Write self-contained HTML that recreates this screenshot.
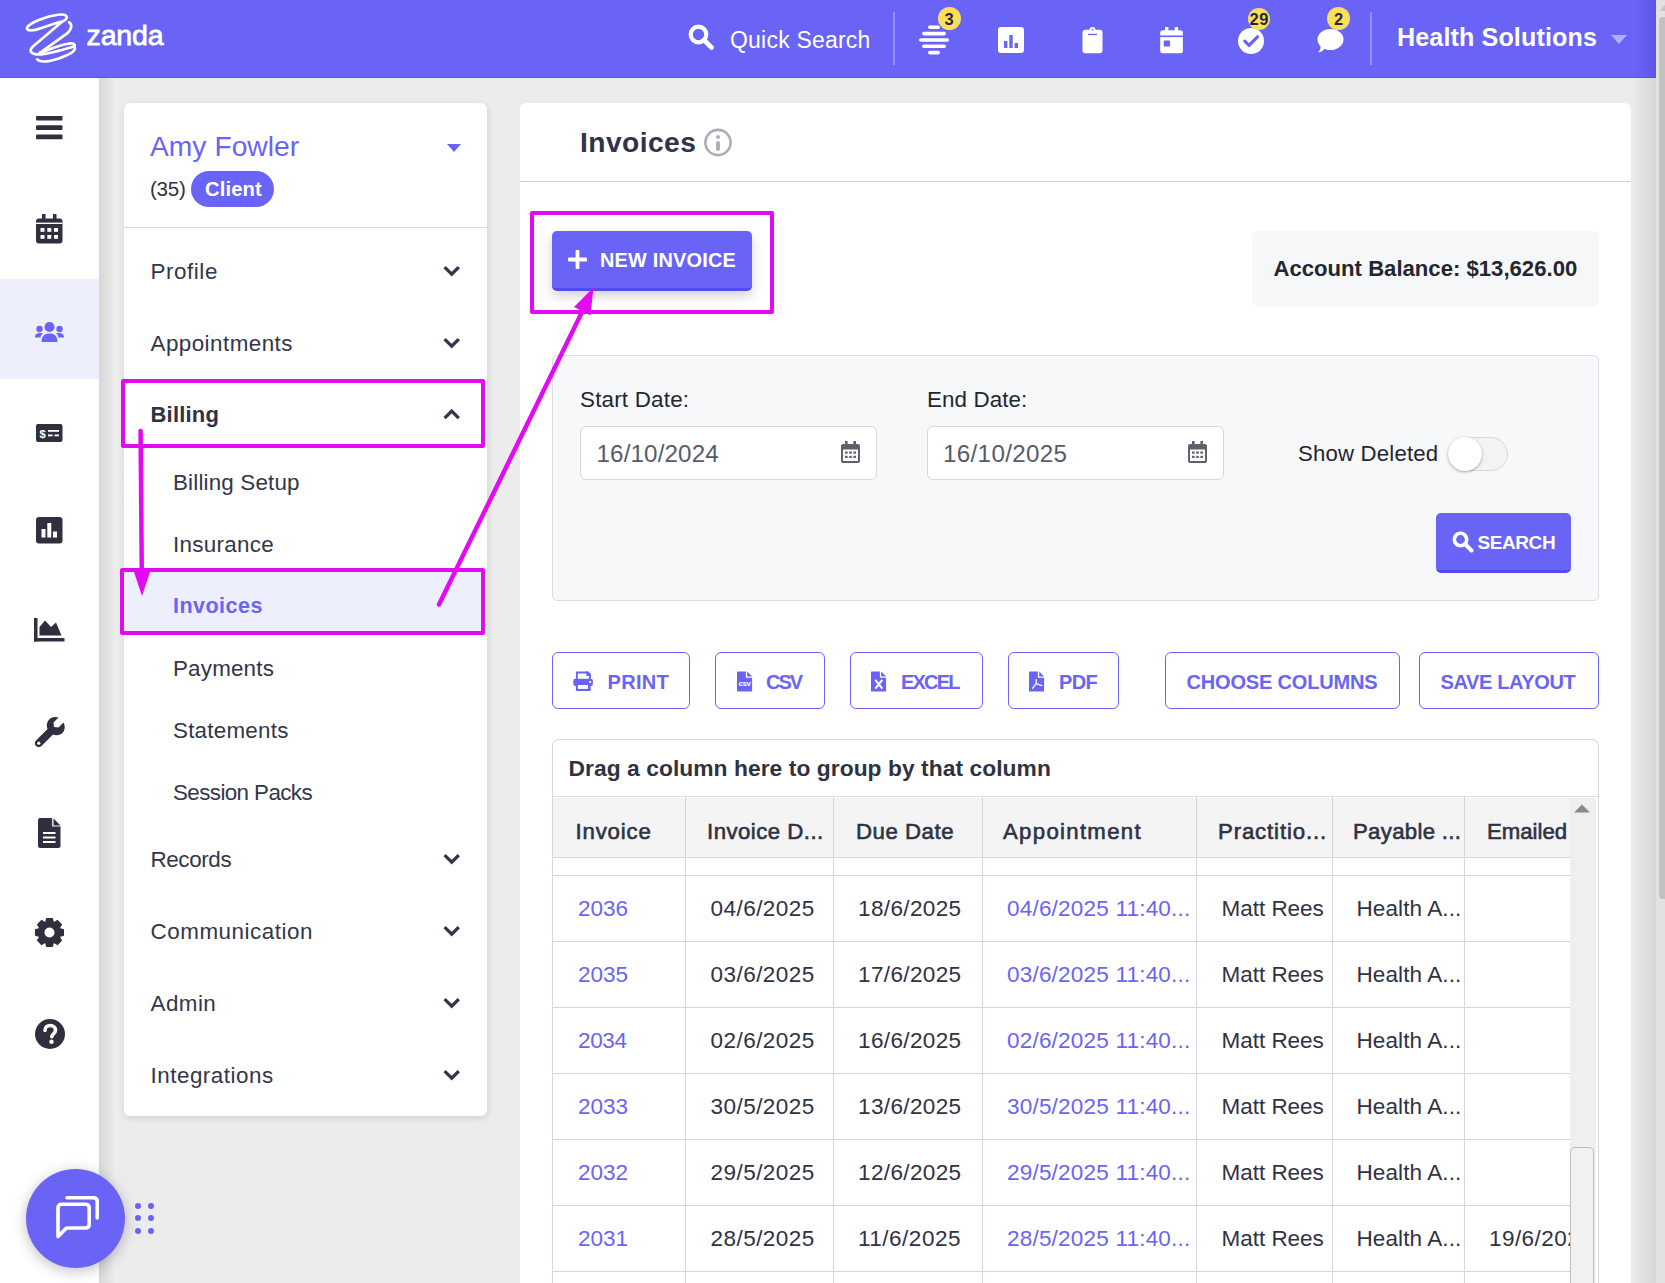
<!DOCTYPE html>
<html><head><meta charset="utf-8"><title>Invoices</title>
<style>
html{margin:0;padding:0;width:1665px;height:1283px;overflow:hidden;background:#ececec;}
body{margin:0;padding:0;}
body{width:1665px;height:1283px;overflow:hidden;position:relative;background:#ececec;font-family:"Liberation Sans",sans-serif;}
.t{position:absolute;white-space:nowrap;line-height:1;}
.b{position:absolute;}
.badge{background:#fbdf5b;border-radius:50%;color:#262838;font-weight:700;font-size:16.5px;letter-spacing:0.4px;line-height:1;display:flex;align-items:center;justify-content:center;font-family:"Liberation Sans",sans-serif;}
</style></head><body>
<div class="b" style="left:0px;top:0px;width:1656px;height:78px;background:#6964f6;"></div>
<div class="b" style="left:0px;top:77px;width:1656px;height:1px;background:#5b56ea;"></div>
<div class="b" style="left:1636px;top:0px;width:20px;height:78px;background:linear-gradient(90deg,rgba(40,30,160,0),rgba(40,30,160,.2));"></div>
<svg class="b" style="left:20px;top:8px;" width="150" height="62" viewBox="0 0 1665 688"><g fill="none" stroke="#fff" stroke-width="30" stroke-linecap="round" stroke-linejoin="round"><path d="M470,150 C560,110 520,60 420,75 C300,90 110,160 80,215 C60,260 150,255 230,225 C330,190 420,160 470,150 L140,430 C90,480 130,520 230,515 C330,505 520,450 590,430 C630,410 600,380 520,400 C420,420 300,470 220,495" /><path d="M545,160 C580,180 580,230 520,285 L225,495" /><path d="M190,570 C230,610 340,590 430,560 C520,530 610,490 610,445" /></g></svg>
<div class="t" style="left:86.5px;top:21.37px;font-size:28.5px;color:#fff;font-weight:400;letter-spacing:-0.125px;-webkit-text-stroke:0.8px #fff;">zanda</div>
<svg class="b" style="left:688px;top:24px;" width="27" height="26" viewBox="0 0 27 26"><circle cx="10.5" cy="10.5" r="7.8" fill="none" stroke="#fff" stroke-width="4.2"/><line x1="16" y1="16" x2="23.5" y2="23.5" stroke="#fff" stroke-width="4.6" stroke-linecap="round"/></svg>
<div class="t" style="left:730px;top:29.43px;font-size:23px;color:#fff;font-weight:400;letter-spacing:0.209px;">Quick Search</div>
<div class="b" style="left:893px;top:12px;width:2px;height:53px;background:#9390f9;"></div>
<div class="b" style="left:1370px;top:12px;width:2px;height:53px;background:#9390f9;"></div>
<svg class="b" style="left:919px;top:26px;overflow:visible;" width="30" height="30" viewBox="0 0 30 30"><rect x="9" y="-0.50" width="12" height="3.6" rx="1.8" fill="#fff"/><rect x="3" y="5.80" width="24" height="3.6" rx="1.8" fill="#fff"/><rect x="0" y="12.20" width="30" height="3.6" rx="1.8" fill="#fff"/><rect x="3" y="18.50" width="24" height="3.6" rx="1.8" fill="#fff"/><rect x="9" y="24.80" width="12" height="3.6" rx="1.8" fill="#fff"/></svg>
<svg class="b" style="left:998px;top:27px;" width="26" height="26" viewBox="0 0 26 26"><rect x="0" y="0" width="26" height="26" rx="3" fill="#fff"/><rect x="6" y="14" width="3.4" height="7" fill="#6964f6"/><rect x="11.3" y="8" width="3.4" height="13" fill="#6964f6"/><rect x="16.6" y="16" width="3.4" height="5" fill="#6964f6"/></svg>
<svg class="b" style="left:1082px;top:26px;" width="21" height="28" viewBox="0 0 21 28"><rect x="0.5" y="3.8" width="20" height="23.5" rx="2.8" fill="#fff"/><circle cx="10.5" cy="3.9" r="3" fill="#fff"/><circle cx="10.5" cy="3.6" r="0.9" fill="#6964f6"/><rect x="6" y="7.8" width="9" height="1.3" fill="#6964f6"/></svg>
<svg class="b" style="left:1160px;top:26px;" width="24" height="28" viewBox="0 0 24 28"><rect x="0.2" y="4.2" width="22.7" height="23.1" rx="2.5" fill="#fff"/><rect x="5" y="1.1" width="3.4" height="4" fill="#fff"/><rect x="14.7" y="1.1" width="3.4" height="4" fill="#fff"/><rect x="0" y="9.5" width="23" height="1.6" fill="#6964f6"/><rect x="3.75" y="14.4" width="6.25" height="6.2" rx="0.6" fill="#6964f6"/></svg>
<svg class="b" style="left:1238px;top:27.5px;" width="26" height="26" viewBox="0 0 26 26"><circle cx="13" cy="13" r="13" fill="#fff"/><path d="M6.8,13.2 L11,17.4 L19.5,8.8" fill="none" stroke="#6964f6" stroke-width="3.2" stroke-linecap="round" stroke-linejoin="round"/></svg>
<svg class="b" style="left:1316px;top:28px;" width="28" height="25" viewBox="0 0 28 25"><ellipse cx="14.5" cy="11.5" rx="13" ry="10.5" fill="#fff"/><path d="M2,24.5 C6,24 9,21.5 9,19 L4.5,17.5 C5,20 4,22.5 2,24.5z" fill="#fff"/></svg>
<div class="b badge" style="left:937.5px;top:7.399999999999999px;width:23px;height:23px;"><span style="position:relative;top:0.5px;left:0.2px">3</span></div>
<div class="b badge" style="left:1247.75px;top:7.649999999999999px;width:22.5px;height:22.5px;"><span style="position:relative;top:0.5px;left:0.2px">29</span></div>
<div class="b badge" style="left:1327.0px;top:7.399999999999999px;width:23px;height:23px;"><span style="position:relative;top:0.5px;left:0.2px">2</span></div>
<div class="t" style="left:1397px;top:25.45px;font-size:25.1px;color:#fff;font-weight:700;letter-spacing:0.127px;">Health Solutions</div>
<svg class="b" style="left:1611px;top:35px;" width="16" height="10" viewBox="0 0 16 10"><path d="M0,0 L16,0 L8,9z" fill="#b1aefb"/></svg>
<div class="b" style="left:1656px;top:0px;width:9px;height:1283px;background:#e2e2e2;"></div>
<div class="b" style="left:1659px;top:17px;width:6px;height:882px;background:#c1c1c1;border-radius:4px 0 0 4px;"></div>
<svg class="b" style="left:1658px;top:3px;overflow:hidden;" width="7" height="9" viewBox="0 0 7 9"><path d="M1,8 L8,1 L15,8z" fill="#c4c4c4"/></svg>
<div class="b" style="left:1631px;top:78px;width:25px;height:1205px;background:linear-gradient(90deg,rgba(0,0,0,0),rgba(0,0,0,.09));"></div>
<div class="b" style="left:0px;top:78px;width:99px;height:1205px;background:#fff;"></div>
<div class="b" style="left:99px;top:78px;width:16px;height:1205px;background:linear-gradient(90deg,rgba(0,0,0,.09),rgba(0,0,0,0));"></div>
<div class="b" style="left:0px;top:279px;width:99px;height:100px;background:#eeeffd;"></div>
<svg class="b" style="left:36px;top:116px;" width="27" height="24" viewBox="0 0 27 24"><rect x="0" y="0" width="26.5" height="4.6" rx="1" fill="#2f2f3f"/><rect x="0" y="9.3" width="26.5" height="4.6" rx="1" fill="#2f2f3f"/><rect x="0" y="18.6" width="26.5" height="4.6" rx="1" fill="#2f2f3f"/></svg>
<svg class="b" style="left:36px;top:214px;" width="27" height="30" viewBox="0 0 27 30"><rect x="0" y="4.5" width="26.5" height="25" rx="3" fill="#2f2f3f"/><rect x="6" y="0" width="3.5" height="6" fill="#2f2f3f"/><rect x="17" y="0" width="3.5" height="6" fill="#2f2f3f"/><rect x="0" y="8.6" width="26.5" height="1.4" fill="#fff"/><rect x="4.5" y="14" width="4" height="3.8" fill="#fff"/><rect x="4.5" y="21" width="4" height="3.8" fill="#fff"/><rect x="11.3" y="14" width="4" height="3.8" fill="#fff"/><rect x="11.3" y="21" width="4" height="3.8" fill="#fff"/><rect x="18" y="14" width="4" height="3.8" fill="#fff"/><rect x="18" y="21" width="4" height="3.8" fill="#fff"/></svg>
<svg class="b" style="left:35px;top:322px;" width="29" height="21" viewBox="0 0 29 21"><circle cx="14.5" cy="5" r="5" fill="#6964f6"/><path d="M6.5,20 C6.5,14 9.5,11.5 14.5,11.5 C19.5,11.5 22.5,14 22.5,20z" fill="#6964f6"/><circle cx="4.5" cy="7" r="3.2" fill="#6964f6"/><circle cx="24.5" cy="7" r="3.2" fill="#6964f6"/><path d="M0,15.5 C0,12 2,11 5.5,11 L8,11 C6.5,12.5 5.5,14 5.5,15.5z" fill="#6964f6"/><path d="M29,15.5 C29,12 27,11 23.5,11 L21,11 C22.5,12.5 23.5,14 23.5,15.5z" fill="#6964f6"/></svg>
<svg class="b" style="left:36px;top:424px;" width="27" height="18" viewBox="0 0 27 18"><rect x="0" y="0" width="26.5" height="18" rx="2" fill="#2f2f3f"/><text x="6.5" y="13.5" font-family="Liberation Sans" font-weight="700" font-size="11" fill="#fff" text-anchor="middle">$</text><rect x="12" y="6" width="11" height="1.8" fill="#fff"/><rect x="12" y="10.5" width="4.5" height="1.8" fill="#fff"/><rect x="18.5" y="10.5" width="4.5" height="1.8" fill="#fff"/></svg>
<svg class="b" style="left:36px;top:517px;" width="27" height="27" viewBox="0 0 27 27"><rect x="0" y="0" width="26.5" height="26.5" rx="3" fill="#2f2f3f"/><rect x="5.5" y="12" width="4" height="8.5" fill="#fff"/><rect x="11.3" y="6" width="4" height="14.5" fill="#fff"/><rect x="17" y="14.5" width="4" height="6" fill="#fff"/></svg>
<svg class="b" style="left:34px;top:618px;" width="31" height="24" viewBox="0 0 31 24"><rect x="0" y="0" width="3.5" height="23.5" fill="#2f2f3f"/><rect x="0" y="20" width="30.5" height="3.5" fill="#2f2f3f"/><path d="M5.5,17.5 L5.5,9 L11,2.5 L17,9 L22,4.5 L27.5,17.5z" fill="#2f2f3f"/></svg>
<svg class="b" style="left:34px;top:716px;" width="31" height="31" viewBox="0 0 31 31"><path d="M29.5,6.5 L24.5,11.5 L20,11 L19.5,6.5 L24.5,1.5 C20.5,0 16,1.5 14,5 C12.5,7.5 12.5,10.5 13.5,13 L2,24.5 C0.5,26 0.5,28.5 2,30 C3.5,31.5 6,31.5 7.5,30 L19,18.5 C21.5,19.5 24.5,19.5 27,18 C30.5,16 32,11 29.5,6.5z" fill="#2f2f3f"/><circle cx="4.8" cy="27.2" r="1.6" fill="#fff"/></svg>
<svg class="b" style="left:38px;top:818px;" width="23" height="30" viewBox="0 0 23 30"><path d="M0,2 C0,1 1,0 2,0 L14,0 L22.5,8.5 L22.5,28 C22.5,29 21.5,30 20.5,30 L2,30 C1,30 0,29 0,28z" fill="#2f2f3f"/><path d="M14.8,0 L14.8,8 L22.5,8" fill="#fff" stroke="#fff" stroke-width="1.2"/><path d="M15.5,0.5 L22.5,7.5 L15.5,7.5z" fill="#2f2f3f"/><rect x="5" y="14" width="12.5" height="2" fill="#fff"/><rect x="5" y="18.5" width="12.5" height="2" fill="#fff"/><rect x="5" y="23" width="12.5" height="2" fill="#fff"/></svg>
<svg class="b" style="left:35px;top:918px;" width="29" height="29" viewBox="0 0 29 29"><path d="M29.14,11.23 L29.14,17.77 L24.54,18.99 L24.77,18.43 L27.17,22.54 L22.54,27.17 L18.43,24.77 L18.99,24.54 L17.77,29.14 L11.23,29.14 L10.01,24.54 L10.57,24.77 L6.46,27.17 L1.83,22.54 L4.23,18.43 L4.46,18.99 L-0.14,17.77 L-0.14,11.23 L4.46,10.01 L4.23,10.57 L1.83,6.46 L6.46,1.83 L10.57,4.23 L10.01,4.46 L11.23,-0.14 L17.77,-0.14 L18.99,4.46 L18.43,4.23 L22.54,1.83 L27.17,6.46 L24.77,10.57 L24.54,10.01z" fill="#2f2f3f"/><circle cx="14.5" cy="14.5" r="10.8" fill="#2f2f3f"/><circle cx="14.5" cy="14.5" r="5" fill="#fff"/></svg>
<svg class="b" style="left:35px;top:1019px;" width="30" height="30" viewBox="0 0 30 30"><circle cx="15" cy="15" r="15" fill="#2f2f3f"/><path d="M10,11.5 C10,8 12.5,6.5 15.2,6.5 C18.2,6.5 20.5,8.5 20.5,11.2 C20.5,14.5 16.8,15 16.8,17.8" fill="none" stroke="#fff" stroke-width="3.6" stroke-linecap="round"/><circle cx="16.5" cy="22.8" r="2.2" fill="#fff"/></svg>
<div class="b" style="left:124px;top:103px;width:363px;height:1013px;background:#fff;border-radius:6px;box-shadow:1px 2px 7px rgba(0,0,0,.12);"></div>
<div class="t" style="left:150px;top:132.13px;font-size:28.2px;color:#6964f6;font-weight:400;letter-spacing:0.044px;">Amy Fowler</div>
<svg class="b" style="left:447px;top:144px;" width="14" height="9" viewBox="0 0 14 9"><path d="M0,0 L14,0 L7,8z" fill="#6964f6"/></svg>
<div class="t" style="left:150px;top:178.75px;font-size:20.5px;color:#2f3243;font-weight:400;letter-spacing:-0.233px;">(35)</div>
<div class="b" style="left:191px;top:171px;width:83px;height:36px;background:#6964f6;border-radius:18px;"></div>
<div class="t" style="left:205px;top:179.00px;font-size:20.2px;color:#fff;font-weight:700;letter-spacing:0.14px;">Client</div>
<div class="b" style="left:124px;top:227px;width:363px;height:1px;background:#dcdce1;"></div>
<div class="t" style="left:150.5px;top:260.54px;font-size:22.4px;color:#33364a;font-weight:400;letter-spacing:0.567px;">Profile</div>
<svg class="b" style="left:443px;top:264.7px;" width="17.4" height="12" viewBox="0 0 17.4 12"><path d="M1.6,2.1 L8.7,9.2 L15.8,2.1" fill="none" stroke="#33364a" stroke-width="3.3" stroke-linecap="butt" stroke-linejoin="miter"/></svg>
<div class="t" style="left:150.5px;top:332.54px;font-size:22.4px;color:#33364a;font-weight:400;letter-spacing:0.455px;">Appointments</div>
<svg class="b" style="left:443px;top:336.7px;" width="17.4" height="12" viewBox="0 0 17.4 12"><path d="M1.6,2.1 L8.7,9.2 L15.8,2.1" fill="none" stroke="#33364a" stroke-width="3.3" stroke-linecap="butt" stroke-linejoin="miter"/></svg>
<div class="t" style="left:150.5px;top:848.54px;font-size:22.4px;color:#33364a;font-weight:400;letter-spacing:-0.383px;">Records</div>
<svg class="b" style="left:443px;top:852.7px;" width="17.4" height="12" viewBox="0 0 17.4 12"><path d="M1.6,2.1 L8.7,9.2 L15.8,2.1" fill="none" stroke="#33364a" stroke-width="3.3" stroke-linecap="butt" stroke-linejoin="miter"/></svg>
<div class="t" style="left:150.5px;top:920.54px;font-size:22.4px;color:#33364a;font-weight:400;letter-spacing:0.542px;">Communication</div>
<svg class="b" style="left:443px;top:924.7px;" width="17.4" height="12" viewBox="0 0 17.4 12"><path d="M1.6,2.1 L8.7,9.2 L15.8,2.1" fill="none" stroke="#33364a" stroke-width="3.3" stroke-linecap="butt" stroke-linejoin="miter"/></svg>
<div class="t" style="left:150.5px;top:992.54px;font-size:22.4px;color:#33364a;font-weight:400;letter-spacing:0.45px;">Admin</div>
<svg class="b" style="left:443px;top:996.7px;" width="17.4" height="12" viewBox="0 0 17.4 12"><path d="M1.6,2.1 L8.7,9.2 L15.8,2.1" fill="none" stroke="#33364a" stroke-width="3.3" stroke-linecap="butt" stroke-linejoin="miter"/></svg>
<div class="t" style="left:150.5px;top:1064.54px;font-size:22.4px;color:#33364a;font-weight:400;letter-spacing:0.509px;">Integrations</div>
<svg class="b" style="left:443px;top:1068.7px;" width="17.4" height="12" viewBox="0 0 17.4 12"><path d="M1.6,2.1 L8.7,9.2 L15.8,2.1" fill="none" stroke="#33364a" stroke-width="3.3" stroke-linecap="butt" stroke-linejoin="miter"/></svg>
<div class="b" style="left:124px;top:572px;width:359px;height:59px;background:#eeeffd;"></div>
<div class="t" style="left:150.5px;top:403.88px;font-size:22px;color:#2f3243;font-weight:700;letter-spacing:0.2px;">Billing</div>
<svg class="b" style="left:443px;top:408.7px;" width="17.4" height="12" viewBox="0 0 17.4 12"><path d="M1.6,9.2 L8.7,2.1 L15.8,9.2" fill="none" stroke="#33364a" stroke-width="3.3" stroke-linecap="butt" stroke-linejoin="miter"/></svg>
<div class="t" style="left:173px;top:471.54px;font-size:22.4px;color:#33364a;font-weight:400;letter-spacing:0.167px;">Billing Setup</div>
<div class="t" style="left:173px;top:533.54px;font-size:22.4px;color:#33364a;font-weight:400;letter-spacing:0.287px;">Insurance</div>
<div class="t" style="left:173px;top:657.54px;font-size:22.4px;color:#33364a;font-weight:400;letter-spacing:0.186px;">Payments</div>
<div class="t" style="left:173px;top:719.54px;font-size:22.4px;color:#33364a;font-weight:400;letter-spacing:0.233px;">Statements</div>
<div class="t" style="left:173px;top:781.54px;font-size:22.4px;color:#33364a;font-weight:400;letter-spacing:-0.6px;">Session Packs</div>
<div class="t" style="left:173px;top:596.30px;font-size:21.5px;color:#6964f6;font-weight:700;letter-spacing:0.471px;">Invoices</div>
<div class="b" style="left:520px;top:103px;width:1111px;height:1180px;background:#fff;border-radius:6px 6px 0 0;box-shadow:0 0 1px rgba(0,0,0,.06);"></div>
<div class="t" style="left:580px;top:128.43px;font-size:28.2px;color:#2f3446;font-weight:700;letter-spacing:0.429px;">Invoices</div>
<svg class="b" style="left:703px;top:128px;" width="30" height="30" viewBox="0 0 30 30"><circle cx="15" cy="14.5" r="12.6" fill="none" stroke="#acadb5" stroke-width="2.6"/><circle cx="15" cy="9" r="1.95" fill="#acadb5"/><rect x="13.05" y="13" width="3.9" height="10" rx="1.95" fill="#acadb5"/></svg>
<div class="b" style="left:520px;top:181px;width:1111px;height:1px;background:#cfd0d7;"></div>
<div class="b" style="left:552px;top:231px;width:200px;height:60px;background:#6964f6;border-radius:5px;border-bottom:3px solid #504bf2;box-sizing:border-box;box-shadow:0 5px 12px rgba(0,0,0,.18);"></div>
<svg class="b" style="left:568px;top:250px;" width="19" height="19" viewBox="0 0 19 19"><rect x="7.6" y="0" width="3.8" height="19" rx="1" fill="#fff"/><rect x="0" y="7.6" width="19" height="3.8" rx="1" fill="#fff"/></svg>
<div class="t" style="left:600px;top:250.65px;font-size:19.9px;color:#fff;font-weight:700;letter-spacing:0.2px;">NEW INVOICE</div>
<div class="b" style="left:1252px;top:231px;width:347px;height:75px;background:#f6f7f9;border-radius:6px;"></div>
<div class="t" style="left:1273.5px;top:257.79px;font-size:22.1px;color:#23252f;font-weight:700;letter-spacing:0.015px;">Account Balance: $13,626.00</div>
<div class="b" style="left:552px;top:355px;width:1047px;height:246px;background:#f7f8fa;border:1px solid #dcdde2;border-radius:5px;box-sizing:border-box;"></div>
<div class="t" style="left:580px;top:389.44px;font-size:22.4px;color:#222631;font-weight:400;letter-spacing:0.2px;">Start Date:</div>
<div class="b" style="left:580px;top:426px;width:297px;height:54px;background:#fff;border:1px solid #d6d7dc;border-radius:6px;box-sizing:border-box;"></div>
<svg class="b" style="left:841px;top:441px;" width="19" height="22" viewBox="0 0 19 22"><rect x="0" y="3" width="19" height="19" rx="2" fill="#5f606c"/><rect x="4" y="0" width="2.6" height="4.5" fill="#5f606c"/><rect x="12.4" y="0" width="2.6" height="4.5" fill="#5f606c"/><rect x="2" y="8.5" width="15" height="11.5" fill="#fff"/><rect x="4" y="10.5" width="2.6" height="2.2" fill="#5f606c"/><rect x="4" y="14.8" width="2.6" height="2.2" fill="#5f606c"/><rect x="8.2" y="10.5" width="2.6" height="2.2" fill="#5f606c"/><rect x="8.2" y="14.8" width="2.6" height="2.2" fill="#5f606c"/><rect x="12.4" y="10.5" width="2.6" height="2.2" fill="#5f606c"/><rect x="12.4" y="14.8" width="2.6" height="2.2" fill="#5f606c"/></svg>
<div class="t" style="left:927px;top:389.44px;font-size:22.4px;color:#222631;font-weight:400;letter-spacing:0.088px;">End Date:</div>
<div class="b" style="left:927px;top:426px;width:297px;height:54px;background:#fff;border:1px solid #d6d7dc;border-radius:6px;box-sizing:border-box;"></div>
<svg class="b" style="left:1188px;top:441px;" width="19" height="22" viewBox="0 0 19 22"><rect x="0" y="3" width="19" height="19" rx="2" fill="#5f606c"/><rect x="4" y="0" width="2.6" height="4.5" fill="#5f606c"/><rect x="12.4" y="0" width="2.6" height="4.5" fill="#5f606c"/><rect x="2" y="8.5" width="15" height="11.5" fill="#fff"/><rect x="4" y="10.5" width="2.6" height="2.2" fill="#5f606c"/><rect x="4" y="14.8" width="2.6" height="2.2" fill="#5f606c"/><rect x="8.2" y="10.5" width="2.6" height="2.2" fill="#5f606c"/><rect x="8.2" y="14.8" width="2.6" height="2.2" fill="#5f606c"/><rect x="12.4" y="10.5" width="2.6" height="2.2" fill="#5f606c"/><rect x="12.4" y="14.8" width="2.6" height="2.2" fill="#5f606c"/></svg>
<div class="t" style="left:596.5px;top:442.11px;font-size:24.2px;color:#575b69;font-weight:400;letter-spacing:0.122px;">16/10/2024</div>
<div class="t" style="left:943px;top:442.11px;font-size:24.2px;color:#575b69;font-weight:400;letter-spacing:0.333px;">16/10/2025</div>
<div class="t" style="left:1298px;top:443.21px;font-size:22.2px;color:#222631;font-weight:400;letter-spacing:0.182px;">Show Deleted</div>
<div class="b" style="left:1448px;top:437px;width:60px;height:34px;background:#f3f3f5;border:1.5px solid #d8d8dc;border-radius:17px;box-sizing:border-box;"></div>
<div class="b" style="left:1448px;top:437px;width:34px;height:34px;background:#fff;border-radius:50%;box-shadow:0 1px 3px rgba(0,0,0,.35);"></div>
<div class="b" style="left:1436px;top:513px;width:135px;height:60px;background:#6964f6;border-radius:5px;border-bottom:3px solid #504bf2;box-sizing:border-box;"></div>
<svg class="b" style="left:1452px;top:531px;" width="22" height="22" viewBox="0 0 22 22"><circle cx="8.5" cy="8.5" r="6.2" fill="none" stroke="#fff" stroke-width="3.6"/><line x1="13" y1="13" x2="19.5" y2="19.5" stroke="#fff" stroke-width="4" stroke-linecap="round"/></svg>
<div class="t" style="left:1477.5px;top:533.02px;font-size:19px;color:#fff;font-weight:700;letter-spacing:-0.42px;">SEARCH</div>
<div class="b" style="left:552px;top:652px;width:138px;height:57px;background:#fff;border:1.5px solid #6964f6;border-radius:6px;box-sizing:border-box;"></div>
<div class="b" style="left:715px;top:652px;width:110px;height:57px;background:#fff;border:1.5px solid #6964f6;border-radius:6px;box-sizing:border-box;"></div>
<div class="b" style="left:850px;top:652px;width:133px;height:57px;background:#fff;border:1.5px solid #6964f6;border-radius:6px;box-sizing:border-box;"></div>
<div class="b" style="left:1008px;top:652px;width:111px;height:57px;background:#fff;border:1.5px solid #6964f6;border-radius:6px;box-sizing:border-box;"></div>
<div class="b" style="left:1165px;top:652px;width:235px;height:57px;background:#fff;border:1.5px solid #6964f6;border-radius:6px;box-sizing:border-box;"></div>
<div class="b" style="left:1419px;top:652px;width:180px;height:57px;background:#fff;border:1.5px solid #6964f6;border-radius:6px;box-sizing:border-box;"></div>
<svg class="b" style="left:573px;top:671px;" width="21" height="21" viewBox="0 0 21 21"><path d="M3.85,8 V1.45 H14.8 L16.9,3.55 V8" fill="none" stroke="#6964f6" stroke-width="1.9" stroke-linejoin="miter"/><path d="M13.3,0.5 H15.2 L17.8,3.1 V5 H13.3z" fill="#6964f6"/><rect x="0.3" y="7.8" width="19.6" height="7.1" rx="2" fill="#6964f6"/><rect x="2.9" y="13" width="14.8" height="7" rx="0.8" fill="#6964f6"/><rect x="4.9" y="14" width="10.1" height="3.9" fill="#fff"/><rect x="16.1" y="10.1" width="1.9" height="1.8" fill="#fff"/></svg>
<svg class="b" style="left:736.7px;top:671px;" width="16" height="21" viewBox="0 0 16 21"><path d="M0,1.2 Q0,0.5 0.8,0.5 L8.9,0.5 L8.9,6.7 L15.1,6.7 L15.1,19.9 Q15.1,20.6 14.3,20.6 L0.8,20.6 Q0,20.6 0,19.9z" fill="#6964f6"/><path d="M10.2,0.6 L15.1,5.4 L10.2,5.4z" fill="#6964f6"/><text x="7.6" y="15.2" font-family="Liberation Sans" font-weight="700" font-size="7.8" fill="#fff" text-anchor="middle" letter-spacing="-0.3">csv</text></svg>
<svg class="b" style="left:871.2px;top:671px;" width="16" height="21" viewBox="0 0 16 21"><path d="M0,1.2 Q0,0.5 0.8,0.5 L8.9,0.5 L8.9,6.7 L15.1,6.7 L15.1,19.9 Q15.1,20.6 14.3,20.6 L0.8,20.6 Q0,20.6 0,19.9z" fill="#6964f6"/><path d="M10.2,0.6 L15.1,5.4 L10.2,5.4z" fill="#6964f6"/><path d="M4.3,8.9 L11.3,17.6 M11.3,8.9 L4.3,17.6" stroke="#fff" stroke-width="2.1"/></svg>
<svg class="b" style="left:1029px;top:671px;" width="16" height="21" viewBox="0 0 16 21"><path d="M0,1.2 Q0,0.5 0.8,0.5 L8.9,0.5 L8.9,6.7 L15.1,6.7 L15.1,19.9 Q15.1,20.6 14.3,20.6 L0.8,20.6 Q0,20.6 0,19.9z" fill="#6964f6"/><path d="M10.2,0.6 L15.1,5.4 L10.2,5.4z" fill="#6964f6"/><path d="M7.2,8.6 L7.2,12.6 L3.6,17.2 M7.2,12.6 L12.8,14.6" fill="none" stroke="#fff" stroke-width="1.3" stroke-linecap="round" stroke-linejoin="round"/></svg>
<div class="t" style="left:607.5px;top:672.17px;font-size:20px;color:#6964f6;font-weight:700;letter-spacing:0.325px;">PRINT</div>
<div class="t" style="left:766px;top:672.17px;font-size:20px;color:#6964f6;font-weight:700;letter-spacing:-2.0px;">CSV</div>
<div class="t" style="left:901px;top:672.17px;font-size:20px;color:#6964f6;font-weight:700;letter-spacing:-1.825px;">EXCEL</div>
<div class="t" style="left:1059px;top:672.17px;font-size:20px;color:#6964f6;font-weight:700;letter-spacing:-0.6px;">PDF</div>
<div class="t" style="left:1186.5px;top:672.17px;font-size:20px;color:#6964f6;font-weight:700;letter-spacing:-0.177px;">CHOOSE COLUMNS</div>
<div class="t" style="left:1440.5px;top:672.17px;font-size:20px;color:#6964f6;font-weight:700;letter-spacing:-0.36px;">SAVE LAYOUT</div>
<div class="b" style="left:552px;top:739px;width:1047px;height:544px;background:#fff;border:1px solid #d5d5db;border-bottom:none;border-radius:7px 7px 0 0;box-sizing:border-box;"></div>
<div class="t" style="left:568.5px;top:757.20px;font-size:22.8px;color:#2f3243;font-weight:700;letter-spacing:0.056px;">Drag a column here to group by that column</div>
<div class="b" style="left:553px;top:796px;width:1045px;height:1px;background:#dcdce1;"></div>
<div class="b" style="left:553px;top:798px;width:1017px;height:59px;background:#f4f4f5;"></div>
<div class="b" style="left:553px;top:857px;width:1017px;height:1px;background:#d5d5db;"></div>
<div class="b" style="left:685px;top:797px;width:1px;height:486px;background:#d5d5db;"></div>
<div class="b" style="left:833px;top:797px;width:1px;height:486px;background:#d5d5db;"></div>
<div class="b" style="left:982px;top:797px;width:1px;height:486px;background:#d5d5db;"></div>
<div class="b" style="left:1196px;top:797px;width:1px;height:486px;background:#d5d5db;"></div>
<div class="b" style="left:1332px;top:797px;width:1px;height:486px;background:#d5d5db;"></div>
<div class="b" style="left:1464px;top:797px;width:1px;height:486px;background:#d5d5db;"></div>
<div class="b" style="left:553px;top:797px;width:1017px;height:486px;overflow:hidden;">
<div class="t" style="left:22.5px;top:23.71px;font-size:22.2px;color:#2f3243;font-weight:400;letter-spacing:0.833px;-webkit-text-stroke:0.6px #2f3243;">Invoice</div>
<div class="t" style="left:154px;top:23.71px;font-size:22.2px;color:#2f3243;font-weight:400;letter-spacing:0.482px;-webkit-text-stroke:0.6px #2f3243;">Invoice D...</div>
<div class="t" style="left:303px;top:23.71px;font-size:22.2px;color:#2f3243;font-weight:400;letter-spacing:0.543px;-webkit-text-stroke:0.6px #2f3243;">Due Date</div>
<div class="t" style="left:450px;top:23.71px;font-size:22.2px;color:#2f3243;font-weight:400;letter-spacing:1.3px;-webkit-text-stroke:0.6px #2f3243;">Appointment</div>
<div class="t" style="left:665px;top:23.71px;font-size:22.2px;color:#2f3243;font-weight:400;letter-spacing:0.864px;-webkit-text-stroke:0.6px #2f3243;">Practitio...</div>
<div class="t" style="left:800px;top:23.71px;font-size:22.2px;color:#2f3243;font-weight:400;letter-spacing:0.3px;-webkit-text-stroke:0.6px #2f3243;">Payable ...</div>
<div class="t" style="left:934px;top:23.71px;font-size:22.2px;color:#2f3243;font-weight:400;letter-spacing:0px;-webkit-text-stroke:0.6px #2f3243;">Emailed</div>
<div class="b" style="left:0px;top:78px;width:1017px;height:1px;background:#d5d5db;"></div>
<div class="b" style="left:0px;top:144px;width:1017px;height:1px;background:#d5d5db;"></div>
<div class="t" style="left:25px;top:101.45px;font-size:22.5px;color:#6964f6;font-weight:400;letter-spacing:0.0px;">2036</div>
<div class="t" style="left:157.5px;top:101.45px;font-size:22.5px;color:#2f3243;font-weight:400;letter-spacing:0.463px;">04/6/2025</div>
<div class="t" style="left:305px;top:101.45px;font-size:22.5px;color:#2f3243;font-weight:400;letter-spacing:0.375px;">18/6/2025</div>
<div class="t" style="left:454px;top:101.45px;font-size:22.5px;color:#6964f6;font-weight:400;letter-spacing:0.206px;">04/6/2025 11:40...</div>
<div class="t" style="left:668.5px;top:101.45px;font-size:22.5px;color:#2f3243;font-weight:400;letter-spacing:-0.025px;">Matt Rees</div>
<div class="t" style="left:803.5px;top:101.45px;font-size:22.5px;color:#2f3243;font-weight:400;letter-spacing:0.1px;">Health A...</div>
<div class="b" style="left:0px;top:210px;width:1017px;height:1px;background:#d5d5db;"></div>
<div class="t" style="left:25px;top:167.45px;font-size:22.5px;color:#6964f6;font-weight:400;letter-spacing:0.0px;">2035</div>
<div class="t" style="left:157.5px;top:167.45px;font-size:22.5px;color:#2f3243;font-weight:400;letter-spacing:0.463px;">03/6/2025</div>
<div class="t" style="left:305px;top:167.45px;font-size:22.5px;color:#2f3243;font-weight:400;letter-spacing:0.375px;">17/6/2025</div>
<div class="t" style="left:454px;top:167.45px;font-size:22.5px;color:#6964f6;font-weight:400;letter-spacing:0.206px;">03/6/2025 11:40...</div>
<div class="t" style="left:668.5px;top:167.45px;font-size:22.5px;color:#2f3243;font-weight:400;letter-spacing:-0.025px;">Matt Rees</div>
<div class="t" style="left:803.5px;top:167.45px;font-size:22.5px;color:#2f3243;font-weight:400;letter-spacing:0.1px;">Health A...</div>
<div class="b" style="left:0px;top:276px;width:1017px;height:1px;background:#d5d5db;"></div>
<div class="t" style="left:25px;top:233.45px;font-size:22.5px;color:#6964f6;font-weight:400;letter-spacing:-0.333px;">2034</div>
<div class="t" style="left:157.5px;top:233.45px;font-size:22.5px;color:#2f3243;font-weight:400;letter-spacing:0.463px;">02/6/2025</div>
<div class="t" style="left:305px;top:233.45px;font-size:22.5px;color:#2f3243;font-weight:400;letter-spacing:0.375px;">16/6/2025</div>
<div class="t" style="left:454px;top:233.45px;font-size:22.5px;color:#6964f6;font-weight:400;letter-spacing:0.206px;">02/6/2025 11:40...</div>
<div class="t" style="left:668.5px;top:233.45px;font-size:22.5px;color:#2f3243;font-weight:400;letter-spacing:-0.025px;">Matt Rees</div>
<div class="t" style="left:803.5px;top:233.45px;font-size:22.5px;color:#2f3243;font-weight:400;letter-spacing:0.1px;">Health A...</div>
<div class="b" style="left:0px;top:342px;width:1017px;height:1px;background:#d5d5db;"></div>
<div class="t" style="left:25px;top:299.45px;font-size:22.5px;color:#6964f6;font-weight:400;letter-spacing:0.0px;">2033</div>
<div class="t" style="left:157.5px;top:299.45px;font-size:22.5px;color:#2f3243;font-weight:400;letter-spacing:0.463px;">30/5/2025</div>
<div class="t" style="left:305px;top:299.45px;font-size:22.5px;color:#2f3243;font-weight:400;letter-spacing:0.375px;">13/6/2025</div>
<div class="t" style="left:454px;top:299.45px;font-size:22.5px;color:#6964f6;font-weight:400;letter-spacing:0.206px;">30/5/2025 11:40...</div>
<div class="t" style="left:668.5px;top:299.45px;font-size:22.5px;color:#2f3243;font-weight:400;letter-spacing:-0.025px;">Matt Rees</div>
<div class="t" style="left:803.5px;top:299.45px;font-size:22.5px;color:#2f3243;font-weight:400;letter-spacing:0.1px;">Health A...</div>
<div class="b" style="left:0px;top:408px;width:1017px;height:1px;background:#d5d5db;"></div>
<div class="t" style="left:25px;top:365.45px;font-size:22.5px;color:#6964f6;font-weight:400;letter-spacing:0.0px;">2032</div>
<div class="t" style="left:157.5px;top:365.45px;font-size:22.5px;color:#2f3243;font-weight:400;letter-spacing:0.463px;">29/5/2025</div>
<div class="t" style="left:305px;top:365.45px;font-size:22.5px;color:#2f3243;font-weight:400;letter-spacing:0.375px;">12/6/2025</div>
<div class="t" style="left:454px;top:365.45px;font-size:22.5px;color:#6964f6;font-weight:400;letter-spacing:0.206px;">29/5/2025 11:40...</div>
<div class="t" style="left:668.5px;top:365.45px;font-size:22.5px;color:#2f3243;font-weight:400;letter-spacing:-0.025px;">Matt Rees</div>
<div class="t" style="left:803.5px;top:365.45px;font-size:22.5px;color:#2f3243;font-weight:400;letter-spacing:0.1px;">Health A...</div>
<div class="b" style="left:0px;top:474px;width:1017px;height:1px;background:#d5d5db;"></div>
<div class="t" style="left:25px;top:431.45px;font-size:22.5px;color:#6964f6;font-weight:400;letter-spacing:0.0px;">2031</div>
<div class="t" style="left:157.5px;top:431.45px;font-size:22.5px;color:#2f3243;font-weight:400;letter-spacing:0.463px;">28/5/2025</div>
<div class="t" style="left:305px;top:431.45px;font-size:22.5px;color:#2f3243;font-weight:400;letter-spacing:0.5px;">11/6/2025</div>
<div class="t" style="left:454px;top:431.45px;font-size:22.5px;color:#6964f6;font-weight:400;letter-spacing:0.206px;">28/5/2025 11:40...</div>
<div class="t" style="left:668.5px;top:431.45px;font-size:22.5px;color:#2f3243;font-weight:400;letter-spacing:-0.025px;">Matt Rees</div>
<div class="t" style="left:803.5px;top:431.45px;font-size:22.5px;color:#2f3243;font-weight:400;letter-spacing:0.1px;">Health A...</div>
<div class="t" style="left:936px;top:431.45px;font-size:22.5px;color:#2f3243;font-weight:400;letter-spacing:0.438px;">19/6/2025</div>
</div>
<div class="b" style="left:1570px;top:798px;width:26px;height:485px;background:#efeff0;"></div>
<svg class="b" style="left:1574px;top:804px;" width="16" height="9" viewBox="0 0 16 9"><path d="M0,8.5 L8,0.5 L16,8.5z" fill="#8a8a8a"/></svg>
<div class="b" style="left:1570px;top:1147px;width:24px;height:136px;background:#f1f1f2;border:1px solid #bcbcc1;border-bottom:none;border-radius:5px 5px 0 0;box-sizing:border-box;"></div>
<div class="b" style="left:26px;top:1169px;width:99px;height:99px;background:#6964f6;border-radius:50%;box-shadow:0 3px 14px rgba(0,0,0,.25);"></div>
<svg class="b" style="left:54px;top:1194px;" width="46" height="46" viewBox="0 0 46 46"><g fill="none" stroke="#fff" stroke-width="3.6" stroke-linecap="round" stroke-linejoin="round"><path d="M13,3.8 L39.5,3.8 C41.8,3.8 43.2,5.2 43.2,7.5 L43.2,24" /><path d="M4,42.5 L4,14 C4,11.5 5.5,10.3 7.8,10.3 L31.5,10.3 C33.8,10.3 35.2,11.7 35.2,14 L35.2,30.2 C35.2,32.5 33.8,34 31.5,34 L12.5,34 z" /></g></svg>
<div class="b" style="left:135.2px;top:1203px;width:6px;height:6px;border-radius:50%;background:#6964f6;"></div>
<div class="b" style="left:135.2px;top:1215.3px;width:6px;height:6px;border-radius:50%;background:#6964f6;"></div>
<div class="b" style="left:135.2px;top:1228px;width:6px;height:6px;border-radius:50%;background:#6964f6;"></div>
<div class="b" style="left:147.7px;top:1203px;width:6px;height:6px;border-radius:50%;background:#6964f6;"></div>
<div class="b" style="left:147.7px;top:1215.3px;width:6px;height:6px;border-radius:50%;background:#6964f6;"></div>
<div class="b" style="left:147.7px;top:1228px;width:6px;height:6px;border-radius:50%;background:#6964f6;"></div>
<div class="b" style="left:121px;top:379px;width:364px;height:69px;border:4px solid #e20af2;box-sizing:border-box;border-radius:2px;"></div>
<div class="b" style="left:119.5px;top:568px;width:365.5px;height:67px;border:4px solid #e20af2;box-sizing:border-box;border-radius:2px;"></div>
<div class="b" style="left:530px;top:211px;width:244px;height:103px;border:4px solid #e20af2;box-sizing:border-box;border-radius:2px;"></div>
<svg class="b" style="left:0px;top:0px;" width="1665" height="1283" viewBox="0 0 1665 1283"><line x1="140.6" y1="431" x2="141.8" y2="575" stroke="#e20af2" stroke-width="4.5" stroke-linecap="round"/><path d="M134,572 L150,572 L142,596z" fill="#e20af2"/><line x1="439" y1="604.5" x2="584" y2="308" stroke="#e20af2" stroke-width="4.5" stroke-linecap="round"/><path d="M593.5,287.5 L590.5,315.5 L574,307z" fill="#e20af2"/></svg>
</body></html>
